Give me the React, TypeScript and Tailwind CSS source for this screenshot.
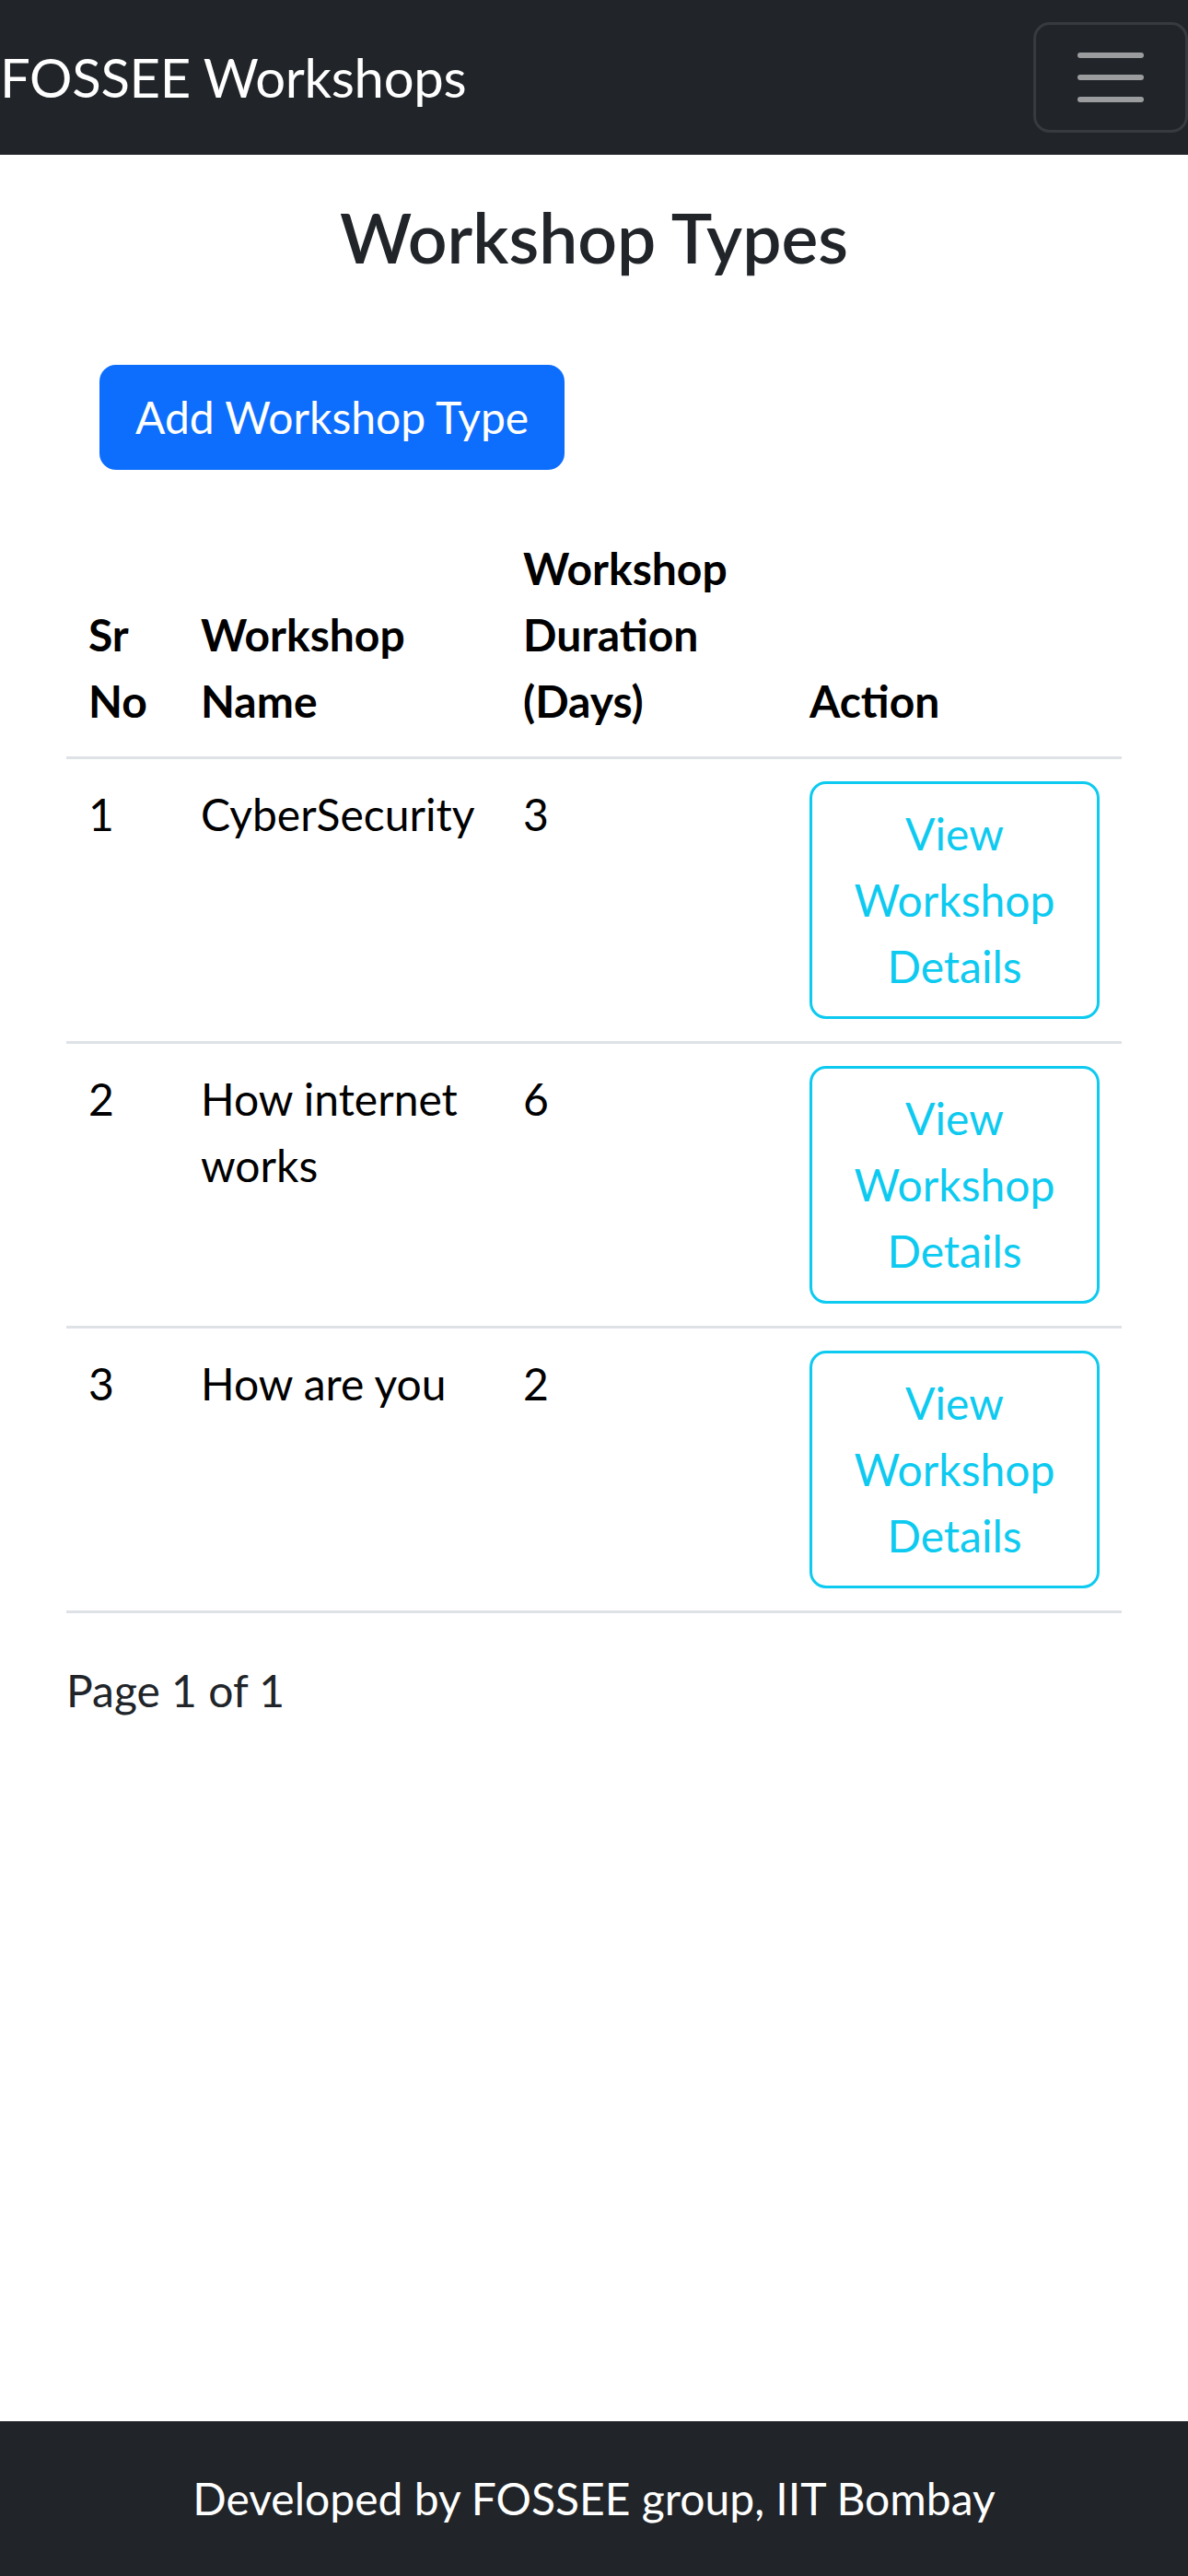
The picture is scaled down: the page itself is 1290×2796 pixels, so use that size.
import { useMemo } from 'react';

type WorkshopType = {
  id: number;
  name: string;
  duration: number;
};

const workshopTypes: WorkshopType[] = [
  { id: 1, name: 'CyberSecurity', duration: 3 },
  { id: 2, name: 'How internet works', duration: 6 },
  { id: 3, name: 'How are you', duration: 2 },
];

function Navbar() {
  return (
    <nav className="h-[168px] bg-[#212529] flex items-center justify-between">
      <a href="#" className="py-[15px] text-[58px] leading-[90px] tracking-[-0.3px] text-white whitespace-nowrap">
        FOSSEE Workshops
      </a>
      <button
        type="button"
        aria-label="Toggle navigation"
        className="w-[168px] h-[120px] border-[3px] border-[#373a3e] rounded-[18px] flex items-center justify-center"
      >
        <svg width="90" height="90" viewBox="0 0 30 30" fill="none">
          <path
            d="M4 7h22M4 15h22M4 23h22"
            stroke="rgba(255,255,255,0.55)"
            strokeWidth="2"
            strokeLinecap="round"
          />
        </svg>
      </button>
    </nav>
  );
}

function WorkshopTable({ rows }: { rows: WorkshopType[] }) {
  return (
    <table className="w-full table-fixed border-collapse text-black text-[48px] leading-[72px]">
      <colgroup>
        <col className="w-[122px]" />
        <col className="w-[350px]" />
        <col className="w-[311px]" />
        <col className="w-[363px]" />
      </colgroup>
      <thead>
        <tr className="border-b-[3px] border-[#dee2e6]">
          <th className="p-[24px] align-bottom text-left font-bold">Sr No</th>
          <th className="p-[24px] align-bottom text-left font-bold">Workshop Name</th>
          <th className="p-[24px] align-bottom text-left font-bold">Workshop Duration (Days)</th>
          <th className="p-[24px] align-bottom text-left font-bold">Action</th>
        </tr>
      </thead>
      <tbody>
        {rows.map((row) => (
          <tr key={row.id} className="border-b-[3px] border-[#dee2e6]">
            <td className="p-[24px] align-top">{row.id}</td>
            <td className="p-[24px] align-top">{row.name}</td>
            <td className="p-[24px] align-top">{row.duration}</td>
            <td className="p-[24px] align-top">
              <a
                href="#"
                className="block w-full text-center border-[3px] border-[#0dcaf0] rounded-[18px] py-[18px] px-[36px] text-[#0dcaf0]"
              >
                View Workshop Details
              </a>
            </td>
          </tr>
        ))}
      </tbody>
    </table>
  );
}

export default function App() {
  const totalPages = useMemo(() => 1, []);

  return (
    <div className="min-h-screen flex flex-col bg-white font-['Lato',sans-serif]">
      <Navbar />

      <main className="flex-1 px-[72px]">
        <h2 className="mt-[44px] text-center text-[75px] leading-[90px] font-semibold text-[#212529]">
          Workshop Types
        </h2>

        <div className="mt-[94px] pl-[36px]">
          <button
            type="button"
            className="h-[114px] px-[36px] bg-[#0d6efd] border-[3px] border-[#0d6efd] rounded-[18px] text-white text-[48px] leading-[72px]"
          >
            Add Workshop Type
          </button>
        </div>

        <div className="mt-[47px]">
          <WorkshopTable rows={workshopTypes} />
        </div>

        <p className="mt-[48px] text-[48px] leading-[72px] text-[#212529]">
          Page 1 of {totalPages}
        </p>
      </main>

      <footer className="bg-[#212529] py-[48px] text-center text-white text-[48px] leading-[72px]">
        Developed by FOSSEE group, IIT Bombay
      </footer>
    </div>
  );
}
